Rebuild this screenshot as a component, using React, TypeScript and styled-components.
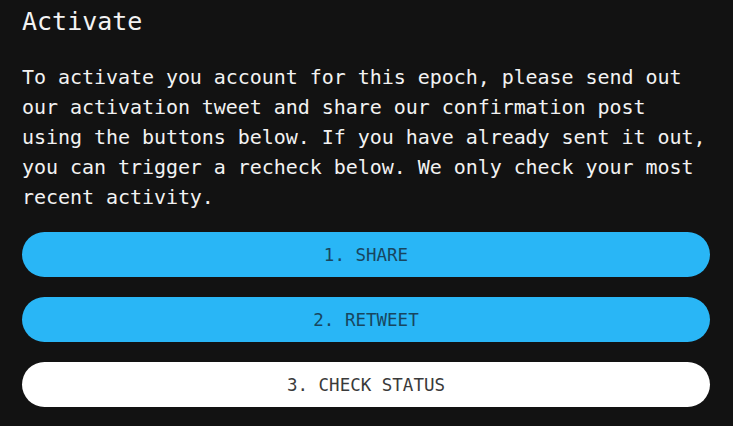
import styled, { createGlobalStyle } from 'styled-components';

const GlobalStyle = createGlobalStyle`
    html, body {
        margin: 0;
        padding: 0;
        background: #121212;
    }
    * {
        box-sizing: border-box;
    }
`;

const Page = styled.main`
    display: flex;
    flex-direction: column;
    padding: 7px 23px 19px 22px;
    min-height: 426px;
    background: #121212;
    color: #f2f2f2;
    font-family: 'DejaVu Sans Mono', 'Liberation Mono', monospace;
`;

const Title = styled.h1`
    margin: 0;
    font-size: 25px;
    line-height: 30px;
    font-weight: 400;
`;

const Description = styled.p`
    margin: 25px 0 20px;
    font-size: 20px;
    line-height: 30px;
    letter-spacing: -0.05px;
`;

const Actions = styled.div`
    display: flex;
    flex-direction: column;
    gap: 20px;
`;

const ActionButton = styled.button<{ $variant: 'primary' | 'light' }>`
    display: flex;
    align-items: center;
    justify-content: center;
    width: 100%;
    height: 45px;
    border: none;
    border-radius: 23px;
    padding: 0;
    background: ${({ $variant }) => ($variant === 'primary' ? '#29b6f6' : '#ffffff')};
    color: ${({ $variant }) => ($variant === 'primary' ? '#18465f' : '#3a3a3a')};
    font-family: 'DejaVu Sans Mono', 'Liberation Mono', monospace;
    font-size: 17.5px;
    text-transform: uppercase;
    cursor: pointer;
`;

const steps: { label: string; variant: 'primary' | 'light' }[] = [
    { label: '1. Share', variant: 'primary' },
    { label: '2. Retweet', variant: 'primary' },
    { label: '3. Check status', variant: 'light' },
];

export default function App() {
    return (
        <>
            <GlobalStyle />
            <Page>
                <Title>Activate</Title>
                <Description>
                    To activate you account for this epoch, please send out our activation tweet and
                    share our confirmation post using the buttons below. If you have already sent it
                    out, you can trigger a recheck below. We only check your most recent activity.
                </Description>
                <Actions>
                    {steps.map((step) => (
                        <ActionButton key={step.label} $variant={step.variant}>
                            {step.label}
                        </ActionButton>
                    ))}
                </Actions>
            </Page>
        </>
    );
}
